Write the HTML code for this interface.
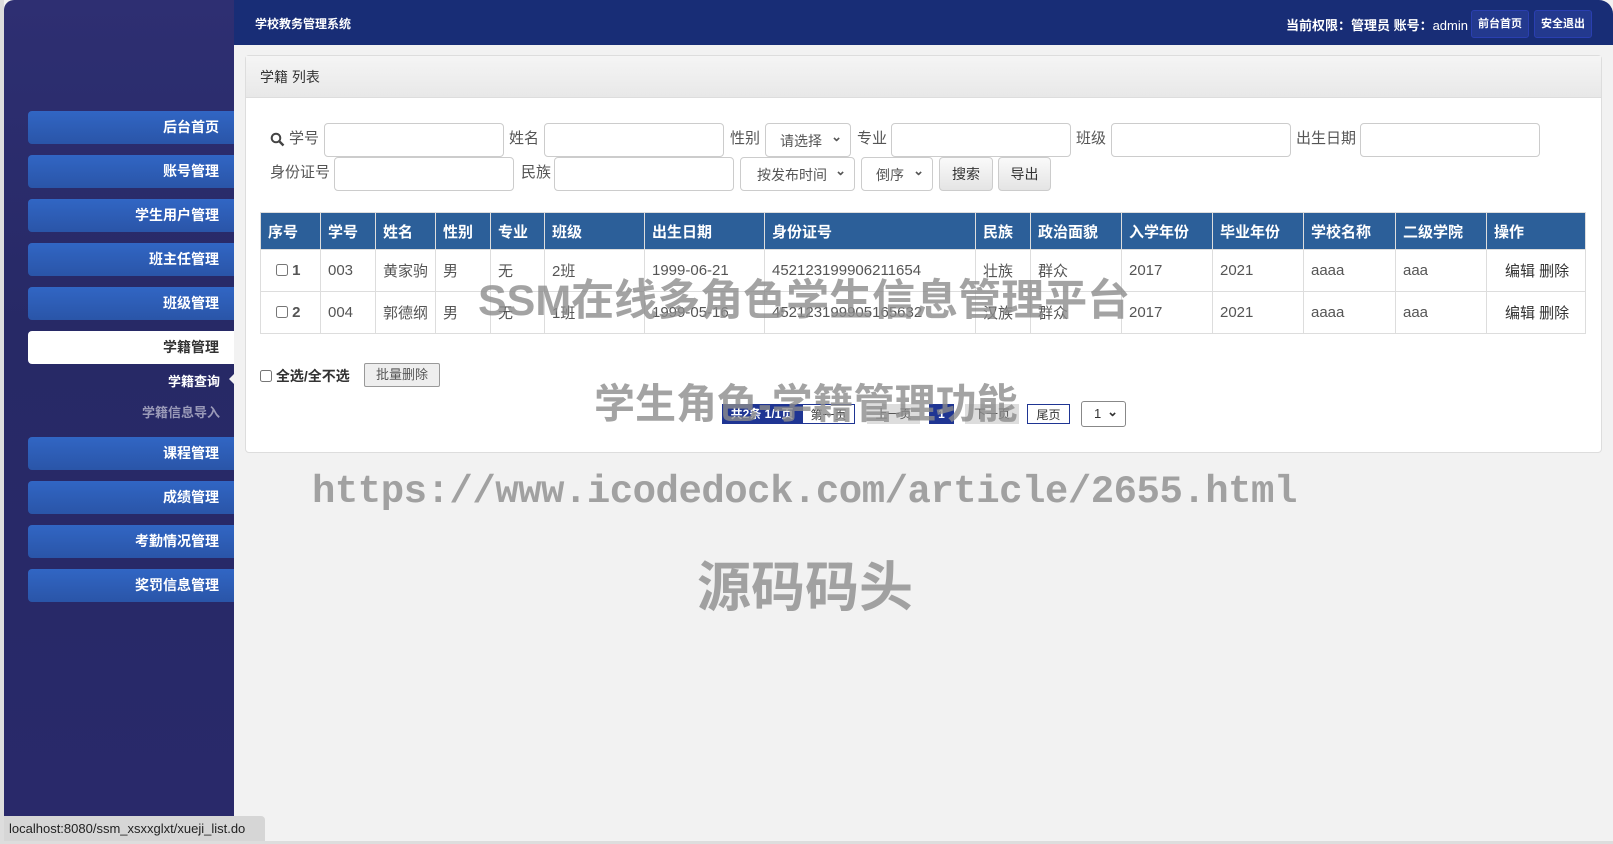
<!DOCTYPE html>
<html><head><meta charset="utf-8"><style>
*{margin:0;padding:0;box-sizing:border-box}
body{width:1613px;height:844px;background:#f2f2f2;font-family:"Liberation Sans","Noto Sans CJK SC",sans-serif;position:relative;overflow:hidden;color:#555}
.a{position:absolute}
#side{left:4px;top:0;width:230px;height:816px;background:linear-gradient(180deg,#2e2f72 0%,#272966 40%,#29296a 100%);border-top-left-radius:10px}
#head{left:234px;top:0;width:1379px;height:45px;background:#182d76;border-top-right-radius:14px}
.nav{left:28px;width:206px;height:33px;background:linear-gradient(180deg,#3166c4,#2a55a8);border-radius:4px 0 0 4px;color:#fff;font-weight:bold;font-size:14px;text-align:right;padding-right:15px;line-height:33px}
.nav.on{background:#fff;color:#333;height:33px}
.sub{left:28px;width:192px;text-align:right;font-size:13px;font-weight:bold}
.lbl{font-size:15px;color:#555;line-height:34px}
.inp{background:#fff;border:1px solid #ccc;border-radius:4px;height:34px}
.sel{background:#fff;border:1px solid #ccc;border-radius:4px;height:34px;font-size:14px;color:#555;line-height:34px;padding-left:14px}
.sel:after{content:"⌄";position:absolute;right:8px;top:-4px;font-size:13px;font-weight:bold}
.btn{background:linear-gradient(#fafafa,#e4e4e4);border:1px solid #ccc;border-radius:4px;height:34px;font-size:14px;color:#333;text-align:center;line-height:32px}
table{border-collapse:collapse;font-size:15px}
th{background:#2c5f99;color:#fff;text-align:left;font-weight:bold;height:37px;padding-left:7px;border:1px solid #ddd;font-size:15px}
td{height:42px;padding-left:7px;border:1px solid #ddd;color:#555;background:#fff}
.wm{color:rgba(140,140,140,0.8);font-weight:bold;white-space:nowrap}
.pg{top:404px;height:20px;font-size:12px;text-align:center;line-height:20px}
</style></head><body>
<div class="a" style="left:0;top:0;width:4px;height:844px;background:#ddd"></div>
<div id="side" class="a"></div>
<div id="head" class="a"></div>
<div class="a" style="left:255px;top:15px;color:#fff;font-size:12px;font-weight:bold">学校教务管理系统</div>
<div class="a" style="right:145px;top:15px;color:#fff;font-size:13px;font-weight:bold;white-space:nowrap">当前权限：管理员 账号：<span style="font-weight:normal">admin</span></div>
<div class="a" style="left:1471px;top:10px;width:58px;height:28px;background:#23398e;border:1px solid #2a3fb0;border-radius:3px;color:#fff;font-size:11px;font-weight:bold;text-align:center;line-height:26px">前台首页</div>
<div class="a" style="left:1534px;top:10px;width:58px;height:28px;background:#23398e;border:1px solid #2a3fb0;border-radius:3px;color:#fff;font-size:11px;font-weight:bold;text-align:center;line-height:26px">安全退出</div>

<div class="a nav" style="top:111px">后台首页</div>
<div class="a nav" style="top:155px">账号管理</div>
<div class="a nav" style="top:199px">学生用户管理</div>
<div class="a nav" style="top:243px">班主任管理</div>
<div class="a nav" style="top:287px">班级管理</div>
<div class="a nav on" style="top:331px">学籍管理</div>
<div class="a sub" style="top:371px;color:#fff">学籍查询</div>
<div class="a" style="left:229px;top:373px;width:0;height:0;border-top:6px solid transparent;border-bottom:6px solid transparent;border-right:6px solid #f2f2f2"></div>
<div class="a sub" style="top:402px;color:#9a9ab8">学籍信息导入</div>
<div class="a nav" style="top:437px">课程管理</div>
<div class="a nav" style="top:481px">成绩管理</div>
<div class="a nav" style="top:525px">考勤情况管理</div>
<div class="a nav" style="top:569px">奖罚信息管理</div>

<div class="a" style="left:245px;top:55px;width:1357px;height:398px;background:#fff;border:1px solid #ddd;border-radius:4px"></div>
<div class="a" style="left:246px;top:56px;width:1355px;height:42px;background:linear-gradient(#f5f5f5,#e8e8e8);border-bottom:1px solid #ddd"></div>
<div class="a" style="left:260px;top:67px;font-size:14px;color:#333">学籍 列表</div>

<svg class="a" style="left:270px;top:132px" width="15" height="15" viewBox="0 0 15 15"><circle cx="6" cy="6" r="4.3" fill="none" stroke="#444" stroke-width="2"/><path d="M9 9l4.5 4.5" stroke="#444" stroke-width="2.4"/></svg>
<div class="a lbl" style="left:289px;top:122px">学号</div>
<div class="a inp" style="left:324px;top:123px;width:180px"></div>
<div class="a lbl" style="left:509px;top:122px">姓名</div>
<div class="a inp" style="left:544px;top:123px;width:180px"></div>
<div class="a lbl" style="left:730px;top:122px">性别</div>
<div class="a sel" style="left:765px;top:123px;width:86px">请选择</div>
<div class="a lbl" style="left:857px;top:122px">专业</div>
<div class="a inp" style="left:891px;top:123px;width:180px"></div>
<div class="a lbl" style="left:1076px;top:122px">班级</div>
<div class="a inp" style="left:1111px;top:123px;width:180px"></div>
<div class="a lbl" style="left:1296px;top:122px">出生日期</div>
<div class="a inp" style="left:1360px;top:123px;width:180px"></div>

<div class="a lbl" style="left:270px;top:156px">身份证号</div>
<div class="a inp" style="left:334px;top:157px;width:180px"></div>
<div class="a lbl" style="left:521px;top:156px">民族</div>
<div class="a inp" style="left:554px;top:157px;width:180px"></div>
<div class="a sel" style="left:740px;top:157px;width:115px;padding-left:16px">按发布时间</div>
<div class="a sel" style="left:861px;top:157px;width:72px">倒序</div>
<div class="a btn" style="left:939px;top:157px;width:54px">搜索</div>
<div class="a btn" style="left:998px;top:157px;width:53px">导出</div>

<table class="a" style="left:260px;top:212px;width:1326px">
<tr><th style="width:60px">序号</th><th style="width:55px">学号</th><th style="width:60px">姓名</th><th style="width:55px">性别</th><th style="width:54px">专业</th><th style="width:100px">班级</th><th style="width:120px">出生日期</th><th style="width:211px">身份证号</th><th style="width:55px">民族</th><th style="width:91px">政治面貌</th><th style="width:91px">入学年份</th><th style="width:91px">毕业年份</th><th style="width:92px">学校名称</th><th style="width:91px">二级学院</th><th>操作</th></tr>
<tr><td style="padding-left:15px"><input type="checkbox" style="width:12px;height:12px;vertical-align:-1px"> <b>1</b></td><td>003</td><td>黄家驹</td><td>男</td><td>无</td><td>2班</td><td>1999-06-21</td><td>452123199906211654</td><td>壮族</td><td>群众</td><td>2017</td><td>2021</td><td>aaaa</td><td>aaa</td><td style="padding-left:18px;color:#333">编辑 删除</td></tr>
<tr><td style="padding-left:15px"><input type="checkbox" style="width:12px;height:12px;vertical-align:-1px"> <b>2</b></td><td>004</td><td>郭德纲</td><td>男</td><td>无</td><td>1班</td><td>1999-05-16</td><td>452123199905165632</td><td>汉族</td><td>群众</td><td>2017</td><td>2021</td><td>aaaa</td><td>aaa</td><td style="padding-left:18px;color:#333">编辑 删除</td></tr>
</table>

<div class="a" style="left:260px;top:366px;font-size:14px;color:#333;font-weight:bold"><input type="checkbox" style="width:12px;height:12px;vertical-align:-1px"> 全选/全不选</div>
<div class="a" style="left:364px;top:363px;width:76px;height:24px;background:#eee;border:1px solid #999;border-radius:2px;font-size:13px;text-align:center;line-height:22px;color:#555">批量删除</div>

<div class="a pg" style="left:722px;width:80px;background:#1f3593;color:#fff;font-weight:bold">共2条 1/1页</div>
<div class="a pg" style="left:802px;width:53px;border:1px solid #1f3593;color:#333">第一页</div>
<div class="a pg" style="left:867px;width:53px;background:#ddd;color:#555">上一页</div>
<div class="a pg" style="left:929px;width:25px;background:#1f3593;color:#fff;font-weight:bold">1</div>
<div class="a pg" style="left:965px;width:54px;background:#ddd;color:#555">下一页</div>
<div class="a pg" style="left:1027px;width:43px;border:1px solid #1f3593;color:#333">尾页</div>
<div class="a" style="left:1081px;top:401px;width:45px;height:26px;border:1px solid #888;border-radius:3px;background:#fff;font-size:13px;line-height:24px;padding-left:12px;color:#333">1 <span style="position:absolute;right:7px;top:-2px;font-weight:bold">⌄</span></div>

<div class="a wm" style="left:478px;top:266px;font-size:43px">SSM在线多角色学生信息管理平台</div>
<div class="a wm" style="left:594px;top:370px;font-size:41px">学生角色-学籍管理功能</div>
<div class="a wm" style="left:312px;top:470px;font-size:39px;font-family:'Liberation Mono',monospace;font-weight:bold;letter-spacing:-0.5px">https://www.icodedock.com/article/2655.html</div>
<div class="a wm" style="left:697px;top:543px;font-size:54px">源码码头</div>

<div class="a" style="left:4px;top:816px;width:261px;height:25px;background:#d6d6d6;border-top-right-radius:4px;font-size:13px;color:#222;line-height:25px;padding-left:5px">localhost:8080/ssm_xsxxglxt/xueji_list.do</div>
<div class="a" style="left:0;top:841px;width:1613px;height:3px;background:#ddd"></div>
</body></html>
